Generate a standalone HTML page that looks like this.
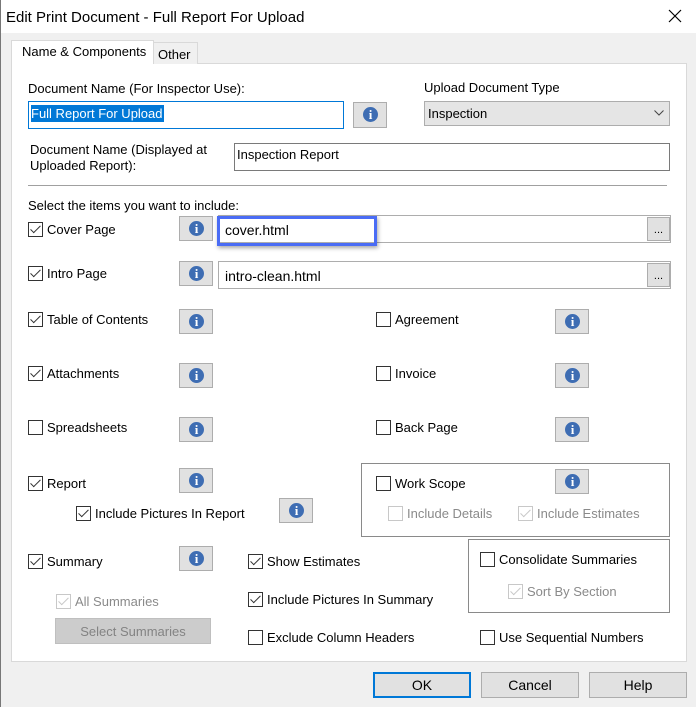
<!DOCTYPE html>
<html><head><style>
*{margin:0;padding:0;box-sizing:border-box}
body{width:696px;height:707px;background:#f0f0f0;font-family:"Liberation Sans",sans-serif;font-size:13px;color:#000;position:relative;overflow:hidden}
.a{position:absolute}
.t{position:absolute;height:16px;line-height:16px;white-space:nowrap;margin-top:1px}
.cb{position:absolute;width:15px;height:15px;border:1px solid #333;background:#fff}
.cb.d{border-color:#c8c8c8}
.ck::after{content:"";position:absolute;left:4px;top:0px;width:4px;height:9px;border:solid #333;border-width:0 1.5px 1.5px 0;transform:rotate(45deg)}
.cb.d.ck::after{border-color:#c8c8c8}
.ib{position:absolute;width:34px;height:25px;background:#e1e1e1;border:1px solid #adadad}
.ib::before{content:"";position:absolute;left:9px;top:4px;width:15px;height:15px;border-radius:50%;background:#3e6db3}
.ib::after{content:"i";position:absolute;left:9px;top:4px;width:15px;text-align:center;color:#fff;font-weight:bold;font-size:13px;line-height:15px;font-family:"Liberation Serif",serif}
.tb{position:absolute;background:#fff;border:1px solid #7a7a7a}
.btn{position:absolute;width:98px;height:26px;background:#e1e1e1;border:1px solid #adadad;text-align:center;line-height:25px;font-size:14px}
.dis{color:#8a8a8a}
.dots{position:absolute;width:23px;height:24px;background:#e1e1e1;border:1px solid #adadad;text-align:center;font-size:11px;line-height:24px}
</style></head><body>
<div class="a" style="left:0;top:0;width:696px;height:33px;background:#fff"></div>
<div class="a" style="left:0;top:0;width:1px;height:707px;background:#777"></div>
<div class="t" style="left:6px;top:8px;font-size:15px;height:18px;line-height:18px">Edit Print Document - Full Report For Upload</div>
<svg class="a" style="left:668px;top:9px" width="14" height="14"><path d="M1 1L13 13M13 1L1 13" stroke="#000" stroke-width="1.2"/></svg>

<div class="a" style="left:11px;top:63px;width:676px;height:599px;background:#fff;border:1px solid #d9d9d9"></div>
<div class="a" style="left:153px;top:42px;width:45px;height:22px;background:#f0f0f0;border:1px solid #d9d9d9;border-bottom:none"></div>
<div class="t" style="left:158px;top:46px">Other</div>
<div class="a" style="left:11px;top:40px;width:143px;height:24px;background:#fff;border:1px solid #d9d9d9;border-bottom:none"></div>
<div class="t" style="left:22px;top:43px">Name &amp; Components</div>

<div class="t" style="left:28px;top:80px">Document Name (For Inspector Use):</div>
<div class="tb" style="left:28px;top:101px;width:316px;height:28px;border-color:#0078d7"></div>
<div class="t" style="left:31px;top:104px;background:#0078d7;color:#fff;height:17px;line-height:17px;padding-right:1px">Full Report For Upload</div>
<div class="ib" style="left:353px;top:102px;height:26px"></div>
<div class="t" style="left:424px;top:79px">Upload Document Type</div>
<div class="a" style="left:424px;top:101px;width:246px;height:25px;background:#e5e5e5;border:1px solid #adadad"></div>
<div class="t" style="left:428px;top:105px">Inspection</div>
<svg class="a" style="left:654px;top:110px" width="10" height="6"><path d="M0.5 0.5L5 5L9.5 0.5" stroke="#444" fill="none"/></svg>

<div class="t" style="left:30px;top:141px">Document Name (Displayed at</div>
<div class="t" style="left:30px;top:157px">Uploaded Report):</div>
<div class="tb" style="left:234px;top:143px;width:436px;height:28px"></div>
<div class="t" style="left:237px;top:146px">Inspection Report</div>
<div class="a" style="left:28px;top:185px;width:639px;height:1px;background:#a0a0a0"></div>

<div class="t" style="left:28px;top:197px">Select the items you want to include:</div>

<div class="cb ck" style="left:28px;top:222px"></div><div class="t" style="left:47px;top:221px">Cover Page</div>
<div class="ib" style="left:179px;top:216px"></div>
<div class="tb" style="left:218px;top:215px;width:453px;height:28px;border-color:#adadad"></div>
<div class="t" style="left:225px;top:220px;font-size:14px;height:18px;line-height:18px">cover.html</div>
<div class="a" style="left:217px;top:216px;width:160px;height:30px;border:3px solid #4a6cf5;box-shadow:1px 2px 4px rgba(0,0,0,.35)"></div>
<div class="dots" style="left:647px;top:217px">...</div>

<div class="cb ck" style="left:28px;top:266px"></div><div class="t" style="left:47px;top:265px">Intro Page</div>
<div class="ib" style="left:179px;top:261px"></div>
<div class="tb" style="left:218px;top:261px;width:453px;height:28px;border-color:#adadad"></div>
<div class="t" style="left:225px;top:266px;font-size:14px;height:18px;line-height:18px">intro-clean.html</div>
<div class="dots" style="left:647px;top:263px">...</div>

<div class="cb ck" style="left:28px;top:312px"></div><div class="t" style="left:47px;top:311px">Table of Contents</div>
<div class="ib" style="left:179px;top:309px"></div>
<div class="cb" style="left:376px;top:312px"></div><div class="t" style="left:395px;top:311px">Agreement</div>
<div class="ib" style="left:555px;top:309px"></div>

<div class="cb ck" style="left:28px;top:366px"></div><div class="t" style="left:47px;top:365px">Attachments</div>
<div class="ib" style="left:179px;top:363px"></div>
<div class="cb" style="left:376px;top:366px"></div><div class="t" style="left:395px;top:365px">Invoice</div>
<div class="ib" style="left:555px;top:363px"></div>

<div class="cb" style="left:28px;top:420px"></div><div class="t" style="left:47px;top:419px">Spreadsheets</div>
<div class="ib" style="left:179px;top:417px"></div>
<div class="cb" style="left:376px;top:420px"></div><div class="t" style="left:395px;top:419px">Back Page</div>
<div class="ib" style="left:555px;top:417px"></div>

<div class="cb ck" style="left:28px;top:476px"></div><div class="t" style="left:47px;top:475px">Report</div>
<div class="ib" style="left:179px;top:468px"></div>
<div class="cb ck" style="left:76px;top:506px"></div><div class="t" style="left:95px;top:505px">Include Pictures In Report</div>
<div class="ib" style="left:279px;top:498px"></div>

<div class="a" style="left:361px;top:463px;width:309px;height:74px;border:1px solid #8a8a8a"></div>
<div class="cb" style="left:376px;top:476px"></div><div class="t" style="left:395px;top:475px">Work Scope</div>
<div class="ib" style="left:555px;top:469px"></div>
<div class="cb d" style="left:388px;top:506px"></div><div class="t dis" style="left:407px;top:505px">Include Details</div>
<div class="cb d ck" style="left:518px;top:506px"></div><div class="t dis" style="left:537px;top:505px">Include Estimates</div>

<div class="cb ck" style="left:28px;top:554px"></div><div class="t" style="left:47px;top:553px">Summary</div>
<div class="ib" style="left:179px;top:546px"></div>
<div class="cb d ck" style="left:56px;top:594px"></div><div class="t dis" style="left:75px;top:593px">All Summaries</div>
<div class="a dis" style="left:55px;top:618px;width:156px;height:26px;background:#cccccc;border:1px solid #bfbfbf;text-align:center;line-height:25px;color:#838383">Select Summaries</div>

<div class="cb ck" style="left:248px;top:554px"></div><div class="t" style="left:267px;top:553px">Show Estimates</div>
<div class="cb ck" style="left:248px;top:592px"></div><div class="t" style="left:267px;top:591px">Include Pictures In Summary</div>
<div class="cb" style="left:248px;top:630px"></div><div class="t" style="left:267px;top:629px">Exclude Column Headers</div>

<div class="a" style="left:468px;top:539px;width:202px;height:74px;border:1px solid #8a8a8a"></div>
<div class="cb" style="left:480px;top:552px"></div><div class="t" style="left:499px;top:551px">Consolidate Summaries</div>
<div class="cb d ck" style="left:508px;top:584px"></div><div class="t dis" style="left:527px;top:583px">Sort By Section</div>
<div class="cb" style="left:480px;top:630px"></div><div class="t" style="left:499px;top:629px">Use Sequential Numbers</div>

<div class="btn" style="left:373px;top:672px;border:2px solid #0078d7;line-height:23px">OK</div>
<div class="btn" style="left:481px;top:672px">Cancel</div>
<div class="btn" style="left:589px;top:672px">Help</div>
</body></html>
